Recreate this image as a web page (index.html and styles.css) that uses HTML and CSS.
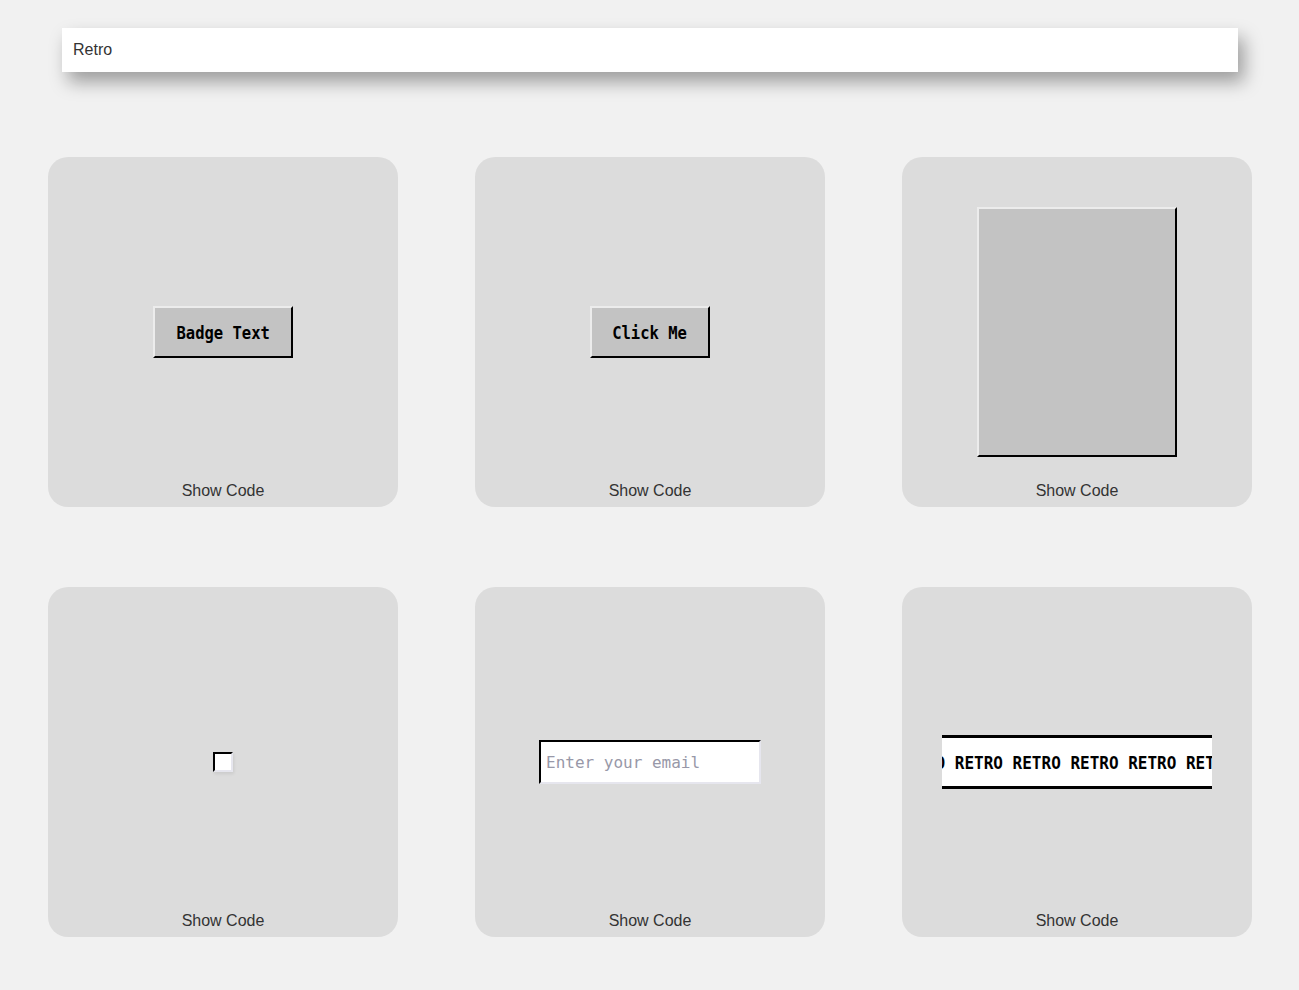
FILE: index.html
```html
<!DOCTYPE html>
<html>
<head>
<meta charset="utf-8">
<link rel="stylesheet" href="styles.css">
</head>
<body>
<div class="page">
  <header class="search">Retro</header>
  <main class="grid">
    <section class="card">
      <div class="preview"><span class="badge"><span class="pix">Badge Text</span></span></div>
      <div class="show">Show Code</div>
    </section>
    <section class="card">
      <div class="preview"><button class="btn"><span class="pix">Click Me</span></button></div>
      <div class="show">Show Code</div>
    </section>
    <section class="card">
      <div class="preview"><div class="panel"></div></div>
      <div class="show">Show Code</div>
    </section>
    <section class="card">
      <div class="preview"><span class="check"></span></div>
      <div class="show">Show Code</div>
    </section>
    <section class="card">
      <div class="preview"><input class="email" type="text" placeholder="Enter your email"></div>
      <div class="show">Show Code</div>
    </section>
    <section class="card">
      <div class="preview"><div class="marquee"><span class="marquee-text">RETRO RETRO RETRO RETRO RETRO RETRO RETRO</span></div></div>
      <div class="show">Show Code</div>
    </section>
  </main>
</div>
</body>
</html>
```

FILE: styles.css
```css
html, body {
  margin: 0;
  padding: 0;
  background: #f1f1f1;
}
body {
  font-family: "Liberation Sans", Arial, sans-serif;
  color: #333;
}
.page {
  width: 1204px;
  margin: 0 0 0 48px;
  padding-top: 28px;
}
.search {
  margin: 0 14px;
  height: 44px;
  box-sizing: border-box;
  background: #fff;
  padding: 0 11px;
  display: flex;
  align-items: center;
  font-size: 16px;
  color: #333;
  box-shadow: 6px 10px 18px rgba(0,0,0,0.35);
}
.grid {
  margin-top: 85px;
  display: grid;
  grid-template-columns: repeat(3, 350px);
  column-gap: 77px;
  row-gap: 80px;
}
.card {
  width: 350px;
  height: 350px;
  background: #dcdcdc;
  border-radius: 20px;
  display: grid;
  grid-template-areas: "cell";
  overflow: hidden;
}
.preview {
  grid-area: cell;
  display: flex;
  align-items: center;
  justify-content: center;
}
.show {
  grid-area: cell;
  align-self: end;
  justify-self: center;
  font-size: 16px;
  color: #333;
  margin-bottom: 7px;
  line-height: 18px;
}
.badge, .btn {
  box-sizing: border-box;
  height: 52px;
  background: #c3c3c3;
  border-style: solid;
  border-width: 2px;
  border-color: #ececec #000 #000 #ececec;
  font-family: "DejaVu Sans Mono", "Liberation Mono", monospace;
  font-weight: bold;
  font-size: 16px;
  color: #000;
  display: flex;
  align-items: center;
  justify-content: center;
}
.pix {
  display: inline-block;
  transform: scale(0.97, 1.15);
}
.badge { width: 140px; }
.btn { width: 120px; padding: 0; }
.panel {
  box-sizing: border-box;
  width: 200px;
  height: 250px;
  background: #c3c3c3;
  border-style: solid;
  border-width: 2px;
  border-color: #ececec #000 #000 #ececec;
}
.check {
  display: block;
  box-sizing: border-box;
  width: 20px;
  height: 20px;
  background: #fff;
  border-style: solid;
  border-width: 2px;
  border-color: #000 #e6e6ee #e6e6ee #000;
  box-shadow: 1px 2px 3px rgba(0,0,0,0.08);
}
.email {
  box-sizing: border-box;
  width: 222px;
  height: 44px;
  margin: 0;
  background: #fff;
  border-style: solid;
  border-width: 2px;
  border-color: #000 #e6e6ee #e6e6ee #000;
  padding: 0 5px;
  font-family: "DejaVu Sans Mono", "Liberation Mono", monospace;
  font-size: 16px;
  outline: none;
}
.email::placeholder {
  color: #9898a8;
}
.marquee {
  box-sizing: border-box;
  width: 270px;
  height: 54px;
  background: #fff;
  border-top: 3px solid #000;
  border-bottom: 3px solid #000;
  overflow: hidden;
  display: flex;
  align-items: center;
  white-space: nowrap;
}
.marquee-text {
  font-family: "DejaVu Sans Mono", "Liberation Mono", monospace;
  font-weight: bold;
  font-size: 16px;
  color: #000;
  transform: translateX(-45px) scaleY(1.15);
  transform-origin: left center;
}
```
